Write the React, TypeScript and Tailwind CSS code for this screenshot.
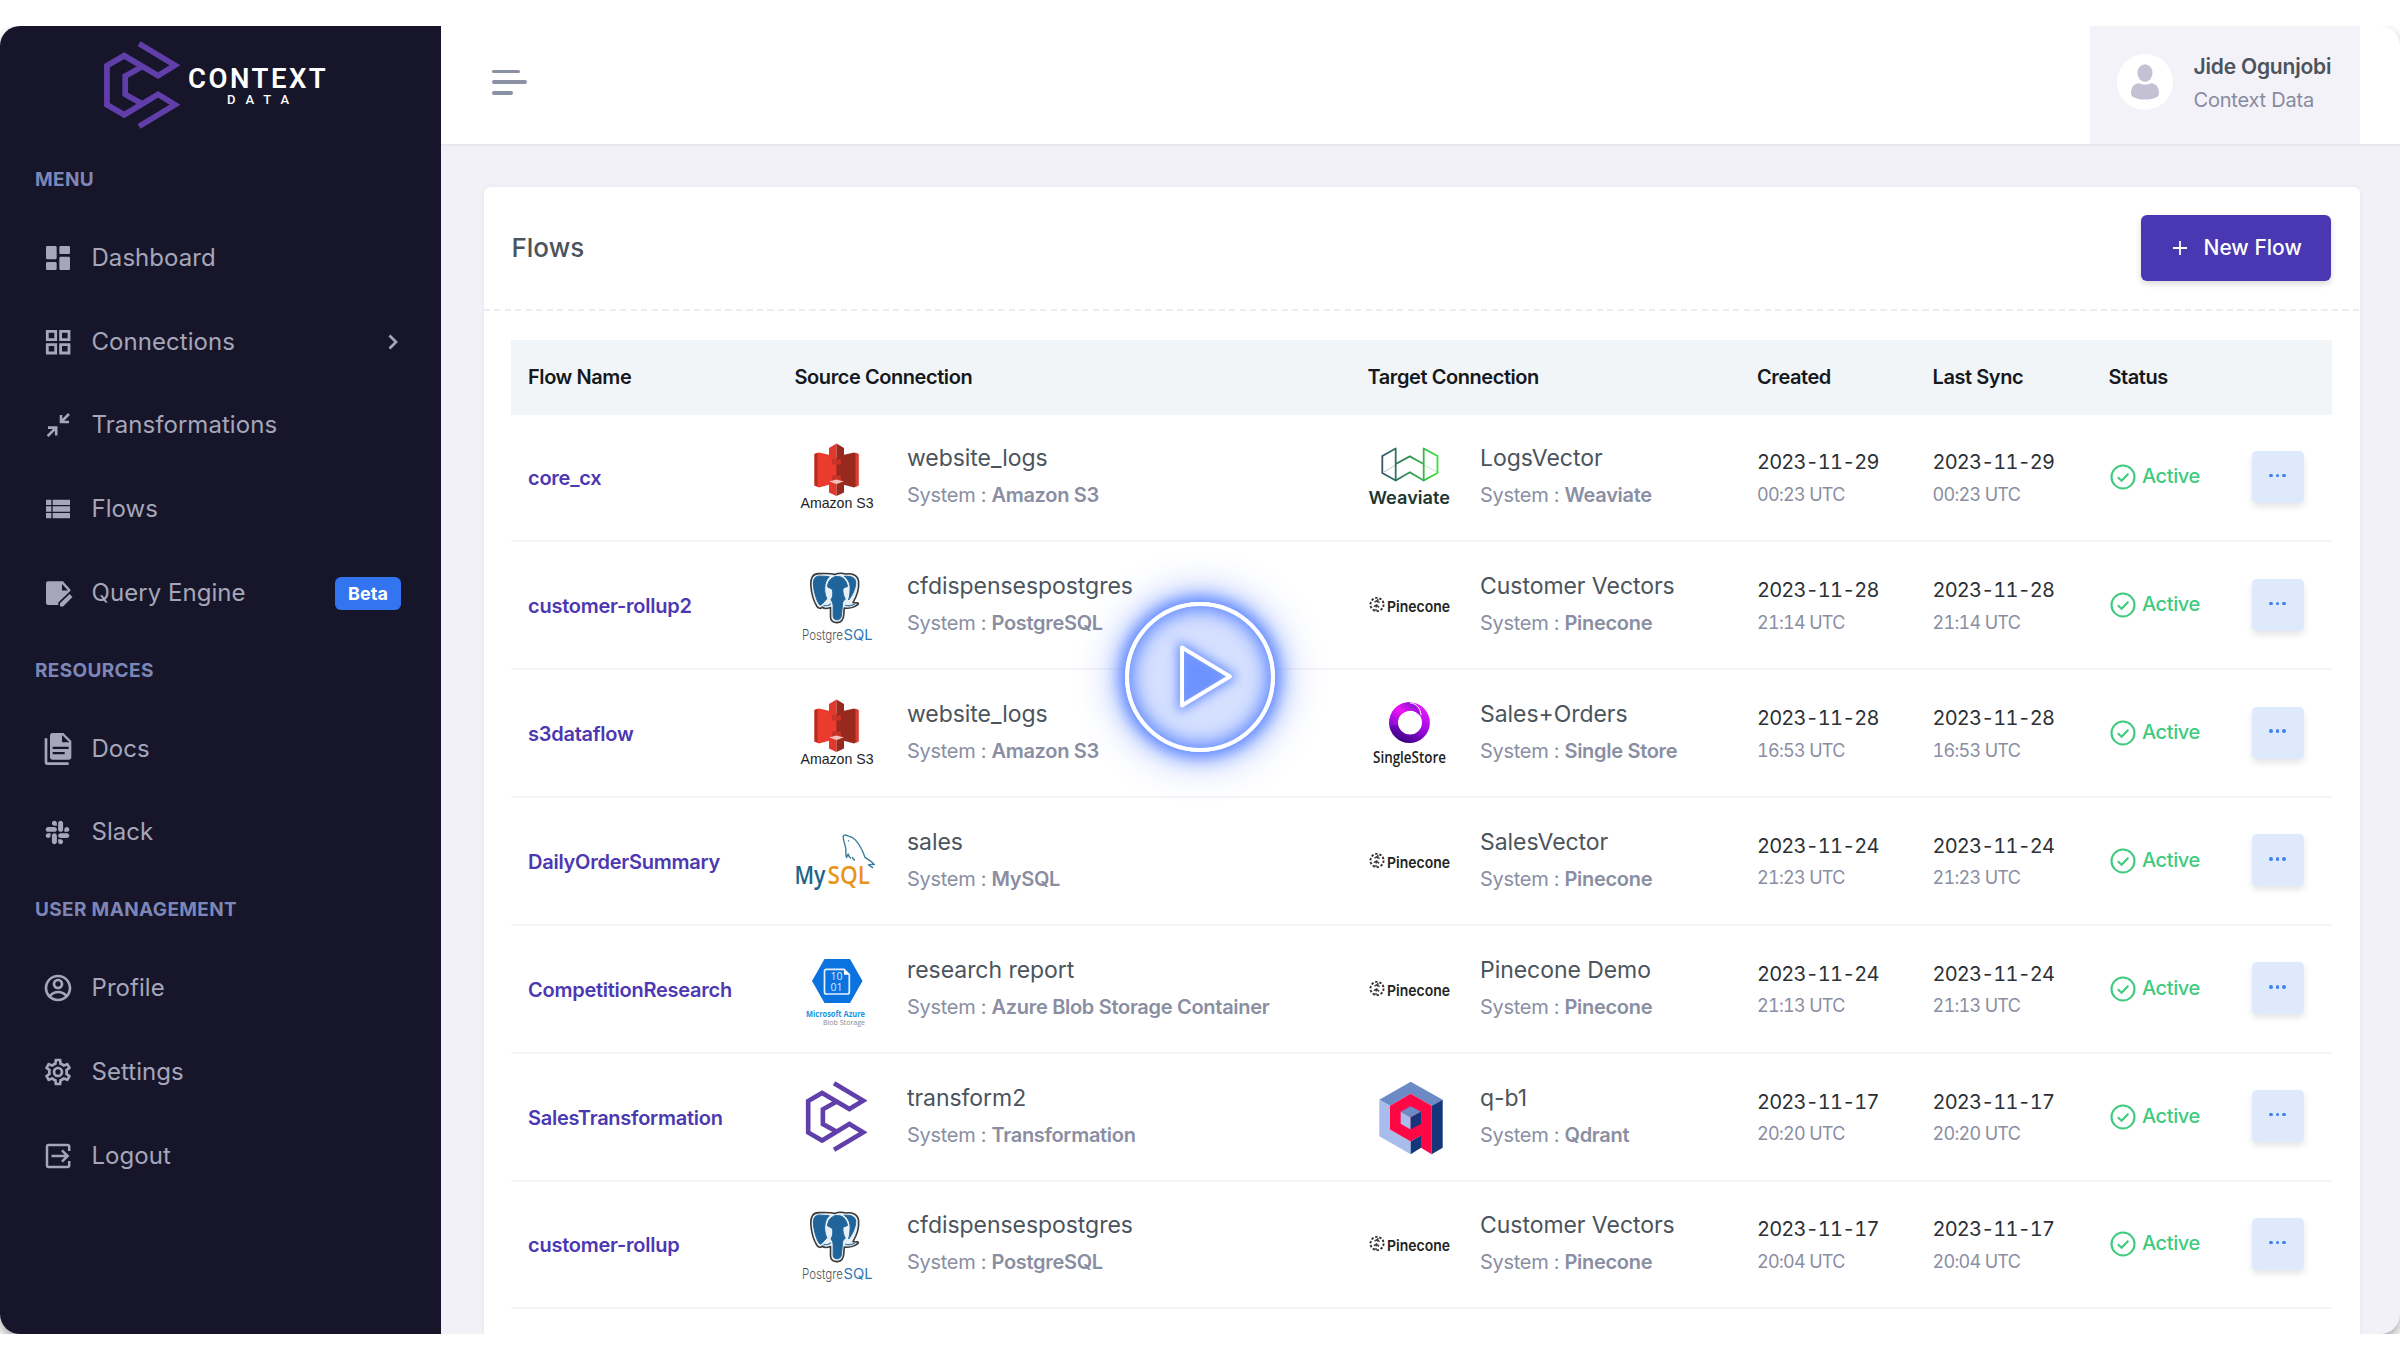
import type { ReactNode } from "react";
import { FaSlack } from "react-icons/fa";
import { MdOutlineSettings, MdViewList } from "react-icons/md";
import { RiAccountCircleLine, RiDashboardFill } from "react-icons/ri";

const INTER = "Inter, sans-serif";
const OPEN = "'Open Sans', sans-serif";

function BrandMark({ className }: { className: string }) {
  return (
    <svg viewBox="103 40 78 89" className={className} fill="none" stroke="#613fab" strokeWidth="5.8">
      <path d="M139.500 42.600 176 64.500 158.800 75 124.500 54.800 107 65v39.500l17.500 10.200L158.800 94 176 104.500 139.500 126.400" />
      <path d="M142.500 66 125.500 75.500v18.500l17 9.500" />
    </svg>
  );
}

/* ---------- sidebar icons ---------- */

const GridIcon = () => (
  <svg viewBox="0 0 32 32" className="size-8" fill="none" stroke="currentColor" strokeWidth="2.800">
    <path d="M5.300 5.300h8.400v8.400H5.300zM18.600 5.300H27v8.400h-8.400zM5.300 18.600h8.400V27H5.300zM18.600 18.600H27V27h-8.400z" />
  </svg>
);

const CollapseIcon = () => (
  <svg viewBox="0 0 32 32" className="size-8" fill="none" stroke="currentColor" strokeWidth="2.600">
    <path d="M19 6v7h8M19 13l8-8M6 18.600h8.200v8M14.200 18.600 5.600 27.200" />
  </svg>
);

const FileEditIcon = () => (
  <svg viewBox="0 0 32 32" className="size-8" fill="currentColor">
    <path
      fillRule="evenodd"
      d="M6 4.300h15l7.500 8.400v1L16.300 25.500V28H6a2 2 0 0 1-2-2V6.300a2 2 0 0 1 2-2zM20 7v6.500h6z"
    />
    <path d="M18 29.500v-3.200l9.600-9.400 2.900 3-9.400 9.600z" />
  </svg>
);

const DocsIcon = () => (
  <svg viewBox="0 0 24 24" className="size-8" fill="currentColor" fillRule="evenodd">
    <path d="M15 7h5.500L15 1.500zM8 0h8l6 6v12a2 2 0 0 1-2 2H8a2 2 0 0 1-2-2V2a2 2 0 0 1 2-2zM4 4v18h16v2H4a2 2 0 0 1-2-2V4zM17 16v-1.700H8V16zM20 12v-1.700H8V12z" />
  </svg>
);

const LogoutIcon = () => (
  <svg viewBox="0 0 32 32" className="size-8" fill="none" stroke="currentColor" strokeWidth="2.500">
    <path d="M27.200 11V6.500A1.500 1.500 0 0 0 25.700 5H6.500A1.500 1.500 0 0 0 5 6.500v19A1.500 1.500 0 0 0 6.500 27h19.200a1.500 1.500 0 0 0 1.500-1.500V21" />
    <path d="M9.500 16h16M20 10.300l5.700 5.700-5.700 5.700" />
  </svg>
);

/* ---------- connection logos ---------- */

const S3Logo = () => (
  <svg viewBox="0 0 84 80" className="h-20 w-21 shrink-0 overflow-visible">
    <path fill="#ea3b2e" d="M19.500 17 24 15.500l13 3V47l-13 3.500-4.500-2z" />
    <path fill="#b52b20" d="m19.500 17 3-1.200v34l-3-1.300z" />
    <path fill="#98291e" d="m46 18.500 13-3 4.500 1.500v31.500l-4.500 2L46 47z" />
    <path fill="#e23a2d" d="m60.500 16 3 1v31.500l-3 1.300z" />
    <path fill="#c93226" d="M37 21h9v25h-9z" />
    <path fill="#e13a2d" d="m34 11 7.500-4.500V23L34 21z" />
    <path fill="#98291e" d="m49 11-7.500-4.500V23l7.500-2z" />
    <path fill="#ea3b2e" d="M34 27.500h7.500v11H34z" />
    <path fill="#98291e" d="M41.500 27.500H49v11h-7.500z" />
    <path fill="#f5c1bb" d="m34 44.500 7.500-2 7.500 2-7.500 3z" />
    <path fill="#e13a2d" d="m34 44.500 7.500 2.500v12L34 55.500z" />
    <path fill="#98291e" d="m49 44.500-7.500 2.500v12l7.500-3.500z" />
    <text x="5.500" y="71" fontSize="15" textLength="73" lengthAdjust="spacingAndGlyphs" fill="#222" fontFamily="'Liberation Sans', sans-serif">
      Amazon S3
    </text>
  </svg>
);

const PostgresLogo = () => (
  <svg viewBox="0 0 84 80" className="h-20 w-21 shrink-0 overflow-visible">
    <g strokeLinejoin="round" strokeLinecap="round">
      <path
        fill="#e8f0f6"
        stroke="#3a3a3a"
        strokeWidth="1.600"
        d="M24 8.600C18 8.300 15.400 13 15.800 20c.5 8 3 16.500 6.200 21.500 1.500 2.400 4.200 2.300 5.500.5 1 1.600 4.500 1.700 8 .6V52c0 4 3 6 7 5.600 4.500-.4 6-3.600 6.300-8l.5-6.600c4.500.7 10.500-.6 13.700-3.600.8-.8.3-1.600-.8-1.500-2 .2-3.200.1-4.200-.3 3.500-6 6.200-14.500 5.600-21C63 10 57 8 50.500 9c-2.600-.8-7-1-11 .4C36 8.200 30 8.400 24 8.600z"
      />
      <g fill="#1f659c" stroke="#1f659c" strokeWidth="1">
        <path d="M24.500 11.200c-5-.6-6.400 3.600-6 8.800.5 7.500 3 15 5.500 19 1.200 1.900 2.100 1.300 3.300-.2l4.500-5c-2-4.500-2.700-8.800-1.700-14.300.6-3.300 1.900-5.700 4.200-7.700-3-.6-6.300-.6-9.800-.6z" />
        <path d="M40 11.800c-5 1.600-7 5-7.500 10l4.700 2.500c1.300 3.500.5 8-1.200 10.500 1 1.600 2.200 3.600 2.200 6V51c0 3 2 4 4.400 3.800 2.800-.2 3.800-2.400 4-6L47.500 39c.2-2.400 1-3.800 2.800-4.800-2-4-3.200-8.800-1.800-11.300l4-1.400C51.500 15.500 47.500 10 40 11.800z" />
        <path d="M49.500 11.400c4 3 6 7.600 5.600 13.100-.2 4-.4 7-1.600 10.500 3.900-4.500 7.200-11.500 7.200-17.700C60.500 12.500 55.500 10.600 49.500 11.400z" />
      </g>
      <path fill="none" stroke="#4a7fa9" strokeWidth="1.300" d="M29 40.500c2.500.5 5 0 6.500-1.500M50.500 40.300c3 .8 6.500.3 9-1.200" />
    </g>
    <text x="7" y="75" fontSize="14.500" textLength="41" lengthAdjust="spacingAndGlyphs" fontWeight="300" fontFamily={INTER} fill="#555">
      Postgre
    </text>
    <text x="48.500" y="75" fontSize="14.500" textLength="29" lengthAdjust="spacingAndGlyphs" fontWeight="400" fontFamily={INTER} fill="#2b77b5">
      SQL
    </text>
  </svg>
);

const MySqlLogo = () => (
  <svg viewBox="0 0 84 80" className="h-20 w-21 shrink-0 overflow-visible">
    <path
      fill="none"
      stroke="#3a7d9c"
      strokeWidth="1.400"
      strokeLinejoin="round"
      d="M56 37.500c-1.500-1-2.400-2.500-2.800-4.500l-1.600 3.500c-1.200-3-.6-6-.8-9-.5-3.500-2.500-7-2.600-12 .4-1.800 2.300-1.800 4.600-.6 2 .4 5 1.200 7.500 4 4.500 5 7.500 11 9.700 17.500 2 1.600 5.600 2.500 9.400 7.200-2.500-.3-4.500-.3-6 .4 1.700 1.200 3.500 1.800 4.600 3M53 19.500l1 .8M60 39c-1.600-.3-2.400-1.400-2.800-3"
    />
    <text x="-0.500" y="63" fontSize="25.500" textLength="31" lengthAdjust="spacingAndGlyphs" fontWeight="600" fontFamily={OPEN} fill="#1c6587">
      My
    </text>
    <text x="32.500" y="63" fontSize="25.500" textLength="42.500" lengthAdjust="spacingAndGlyphs" fontWeight="600" fontFamily={OPEN} fill="#e8951c">
      SQL
    </text>
  </svg>
);

const AzureLogo = () => (
  <svg viewBox="0 0 84 80" className="h-20 w-21 shrink-0 overflow-visible">
    <path fill="#0b73e0" d="M29.500 10h25.500L67.500 32 55 54H29.500L17 32z" />
    <path fill="none" stroke="#e6f1fd" strokeWidth="1.700" d="M32 20.300h17l5.300 5.200V43a2 2 0 0 1-2 2H31.500a2 2 0 0 1-2-2V22.300a2 2 0 0 1 2-2z" />
    <path fill="#fff" d="M49 20v5.700h5.700z" />
    <g fill="#d9e9fc" fontFamily={OPEN} fontSize="10.500" textAnchor="middle">
      <text x="41.500" y="31">10</text>
      <text x="41.500" y="42">01</text>
    </g>
    <text x="11" y="67.500" fontSize="8.500" textLength="59" lengthAdjust="spacingAndGlyphs" fontWeight="700" fontFamily={OPEN} fill="#2492e0">
      Microsoft Azure
    </text>
    <text x="28" y="75.500" fontSize="7.800" textLength="42" lengthAdjust="spacingAndGlyphs" fontFamily={OPEN} fill="#888">
      Blob Storage
    </text>
  </svg>
);

const TransformLogo = () => (
  <div className="flex h-20 w-21 shrink-0 items-center pl-2.5">
    <BrandMark className="h-[71px] w-[62px]" />
  </div>
);

const WeaviateLogo = () => (
  <svg viewBox="0 0 84 80" className="h-20 w-21 shrink-0 overflow-visible">
    <defs>
      <linearGradient id="weaviate" gradientUnits="userSpaceOnUse" x1="14" y1="0" x2="70" y2="0">
        <stop offset="0" stopColor="#35566f" />
        <stop offset="0.300" stopColor="#2b7a5b" />
        <stop offset="0.650" stopColor="#37a84f" />
        <stop offset="1" stopColor="#35e632" />
      </linearGradient>
    </defs>
    <g fill="none" stroke="url(#weaviate)" strokeWidth="1.800" strokeLinejoin="round">
      <path d="M27.700 11.500 14.300 19v17l13.400 7.500zM55.700 11.500 69.500 19v17l-13.800 7.500z" />
      <path d="m27.700 27 14.100-7.600L55.700 27M27.700 43.500l14.100-8.200 13.900 8.200" />
      <path strokeWidth="0.600" opacity="0.600" d="m16 35 11.700-7M69 35l-13.300-7" />
    </g>
    <text x="0.500" y="66.500" fontSize="17.500" textLength="81.500" lengthAdjust="spacingAndGlyphs" fontWeight="600" fontFamily={INTER} fill="#20362f">
      Weaviate
    </text>
  </svg>
);

const PineconeLogo = () => (
  <svg viewBox="0 0 84 80" className="h-20 w-21 shrink-0 overflow-visible">
    <circle cx="9" cy="39.500" r="6.600" fill="none" stroke="#333" strokeWidth="1.900" strokeDasharray="2.400 1.750" />
    <path stroke="#444" strokeWidth="1.500" fill="none" d="M9.800 34 9.300 37.500M8.800 39.500l-.5 3M6.500 37.100l2.800-1.600 2.200 2.300M5.800 41.700l2.800-1.700 2.400 2.400M8 44v2" />
    <text x="19" y="46.500" fontSize="15" textLength="63" lengthAdjust="spacingAndGlyphs" fontWeight="600" fontFamily={INTER} fill="#222">
      Pinecone
    </text>
  </svg>
);

const SingleStoreLogo = () => (
  <svg viewBox="0 0 84 80" className="h-20 w-21 shrink-0 overflow-visible">
    <defs>
      <linearGradient id="ring" x1="0.700" y1="0" x2="0.200" y2="1">
        <stop offset="0" stopColor="#f01cff" />
        <stop offset="0.450" stopColor="#a30ae6" />
        <stop offset="1" stopColor="#2a0075" />
      </linearGradient>
      <linearGradient id="ringTop" x1="0" y1="1" x2="1" y2="0">
        <stop offset="0" stopColor="#7a0bd0" />
        <stop offset="0.500" stopColor="#f214f7" />
        <stop offset="1" stopColor="#5b13c0" />
      </linearGradient>
    </defs>
    <path
      fill="url(#ring)"
      fillRule="evenodd"
      d="M41.500 9.300a20.400 20.400 0 1 0 0 40.800 20.400 20.400 0 0 0 0-40.800zM42 17.500a12 12 0 1 1 0 24 12 12 0 0 1 0-24z"
    />
    <path fill="url(#ringTop)" d="M22 33C19.500 20 29 9.300 41.500 9.300c6 1.200 10 6 10.700 13.700-4-5-9.500-6.500-15-4C31 21.500 29 27 30 32z" />
    <path fill="none" stroke="#fff" strokeWidth="1" d="M42 9.800c6.500 1 10.500 5.500 11 12.500" />
    <text x="5" y="70" fontSize="16.500" textLength="73" lengthAdjust="spacingAndGlyphs" fontWeight="600" fontFamily={OPEN} fill="#222">
      SingleStore
    </text>
  </svg>
);

const QdrantLogo = () => (
  <svg viewBox="0 0 84 80" className="h-20 w-21 shrink-0 overflow-visible">
    <path fill="#6b8ac6" d="m11.300 22.800 31.400-18 32 18-11 6-21-12-20.700 12z" />
    <path fill="#a9bdec" d="m11.300 22.800 10.700 6v23.700l20.700 12v12.700l-31.400-18z" />
    <path fill="#ff0745" d="m42.700 16.800 21 12v48.400L53 70.800V58.500l-10.300 6-20.700-12V28.800z" />
    <path fill="#15377a" d="M74.700 22.800v48l-11 6.400V28.800zM42.700 64.500l10.300-6v12.300l-10.300 6.400z" />
    <path fill="#6b8ac6" d="m32.700 34.800 10-5.600L53 34.800l-10.300 5.700z" />
    <path fill="#a9bdec" d="m32.700 34.800 10 5.700v12l-10-5.700z" />
    <path fill="#15377a" d="M53 34.800 42.700 40.500v12l10.300-5.700z" />
  </svg>
);

/* ---------- sidebar ---------- */

function NavItem({ icon, label, children }: { icon: ReactNode; label: string; children?: ReactNode }) {
  return (
    <a className="flex h-[83.800px] items-center pr-[40px] pl-[42px] text-[24px] tracking-[0.05px] text-[#a5a6b9]">
      {icon}
      <span className="ml-[17.500px] flex-1">{label}</span>
      {children}
    </a>
  );
}

function NavTitle({ children }: { children: ReactNode }) {
  return (
    <div className="flex h-[71.800px] items-center pl-[35px] text-[19px] font-bold tracking-[0.35px] text-[#7c87b7]">
      {children}
    </div>
  );
}

function Sidebar() {
  return (
    <aside className="h-full w-[441px] shrink-0 bg-[#171529]">
      <div className="flex h-[118.700px] items-center pl-[103px]">
        <BrandMark className="h-[88px] w-[77px]" />
        <div className="mt-[4px] ml-[8px] flex flex-col items-center font-[Roboto] text-white">
          <span className="text-[27.500px] leading-[28px] font-semibold tracking-[2.500px]">CONTEXT</span>
          <span className="mt-[-2px] pl-[10px] text-[13px] leading-[18px] font-medium tracking-[10px]">DATA</span>
        </div>
      </div>
      <NavTitle>MENU</NavTitle>
      <NavItem icon={<RiDashboardFill className="size-8" />} label="Dashboard" />
      <NavItem icon={<GridIcon />} label="Connections">
        <svg viewBox="0 0 10 16" className="mr-[3px] h-4 w-2.5" fill="none" stroke="currentColor" strokeWidth="2.700">
          <path d="m1.500 1.500 6.500 6.500-6.500 6.500" />
        </svg>
      </NavItem>
      <NavItem icon={<CollapseIcon />} label="Transformations" />
      <NavItem icon={<MdViewList className="size-8" />} label="Flows" />
      <NavItem icon={<FileEditIcon />} label="Query Engine">
        <span className="flex h-[33px] w-[66px] items-center justify-center rounded-[6px] bg-[#3375f0] text-[18px] font-bold text-white">
          Beta
        </span>
      </NavItem>
      <NavTitle>RESOURCES</NavTitle>
      <NavItem icon={<DocsIcon />} label="Docs" />
      <NavItem icon={<FaSlack className="mr-[3px] ml-[2px] size-[27px]" />} label="Slack" />
      <NavTitle>USER MANAGEMENT</NavTitle>
      <NavItem icon={<RiAccountCircleLine className="size-8" />} label="Profile" />
      <NavItem icon={<MdOutlineSettings className="size-8" />} label="Settings" />
      <NavItem icon={<LogoutIcon />} label="Logout" />
    </aside>
  );
}

/* ---------- header ---------- */

function Header() {
  return (
    <header className="flex h-[120px] items-stretch justify-between border-b-2 border-[#e9e8f0] bg-white pr-[40px] pl-[51px]">
      <div className="flex flex-col gap-[7px] pt-[44px]">
        <span className="h-[3.700px] w-[28px] rounded-full bg-[#8b91a5]" />
        <span className="h-[3.700px] w-[35px] rounded-full bg-[#8b91a5]" />
        <span className="h-[3.700px] w-[21px] rounded-full bg-[#8b91a5]" />
      </div>
      <div className="flex w-[270.500px] bg-[#f3f2f8] pt-[25px] pl-[27px]">
        <svg viewBox="0 0 56 56" className="mt-[3px] size-14 shrink-0 rounded-full bg-white" fill="#c5c1d5">
          <ellipse cx="28" cy="19" rx="7.500" ry="8.800" />
          <path d="M22 29.200c3.500 1.800 8.500 1.800 12 0 5.500.3 8 4.500 8 10.300 0 8-28 8-28 0 0-5.800 2.500-10 8-10.300z" />
        </svg>
        <div className="ml-[21px] whitespace-nowrap">
          <div className="text-[21px] leading-[32px] font-semibold tracking-[-0.2px] text-[#4b545c]">Jide Ogunjobi</div>
          <div className="text-[20px] leading-[34px] tracking-[-0.2px] text-[#878ba0]">Context Data</div>
        </div>
      </div>
    </header>
  );
}

/* ---------- table ---------- */

type Side = { logo: () => ReactNode; name: string; system: string };
type Flow = { name: string; source: Side; target: Side; date: string; time: string };

const s3: Side = { logo: S3Logo, name: "website_logs", system: "Amazon S3" };
const pg: Side = { logo: PostgresLogo, name: "cfdispensespostgres", system: "PostgreSQL" };
const pinecone = (name: string): Side => ({ logo: PineconeLogo, name, system: "Pinecone" });

const flows: Flow[] = [
  { name: "core_cx", source: s3, target: { logo: WeaviateLogo, name: "LogsVector", system: "Weaviate" }, date: "2023-11-29", time: "00:23 UTC" },
  { name: "customer-rollup2", source: pg, target: pinecone("Customer Vectors"), date: "2023-11-28", time: "21:14 UTC" },
  { name: "s3dataflow", source: s3, target: { logo: SingleStoreLogo, name: "Sales+Orders", system: "Single Store" }, date: "2023-11-28", time: "16:53 UTC" },
  { name: "DailyOrderSummary", source: { logo: MySqlLogo, name: "sales", system: "MySQL" }, target: pinecone("SalesVector"), date: "2023-11-24", time: "21:23 UTC" },
  { name: "CompetitionResearch", source: { logo: AzureLogo, name: "research report", system: "Azure Blob Storage Container" }, target: pinecone("Pinecone Demo"), date: "2023-11-24", time: "21:13 UTC" },
  { name: "SalesTransformation", source: { logo: TransformLogo, name: "transform2", system: "Transformation" }, target: { logo: QdrantLogo, name: "q-b1", system: "Qdrant" }, date: "2023-11-17", time: "20:20 UTC" },
  { name: "customer-rollup", source: pg, target: pinecone("Customer Vectors"), date: "2023-11-17", time: "20:04 UTC" },
];

function Connection({ side }: { side: Side }) {
  const Logo = side.logo;
  return (
    <div className="flex items-center">
      <Logo />
      <div className="ml-[28.500px] whitespace-nowrap">
        <div className="text-[23px] leading-[37px] tracking-[-0.05px] text-[#4b545c]">{side.name}</div>
        <div className="text-[20px] leading-[37px] tracking-[-0.3px] text-[#8a8ea2]">
          System : <span className="font-semibold">{side.system}</span>
        </div>
      </div>
    </div>
  );
}

function Stamp({ date, time }: { date: string; time: string }) {
  return (
    <div className="pt-[3px] whitespace-nowrap tabular-nums">
      <div className="text-[20px] leading-[32.500px] tracking-[-0.800px] text-[#2b3036]">{date}</div>
      <div className="text-[18px] leading-[32.500px] tracking-[-0.700px] text-[#8a8ea2]">{time}</div>
    </div>
  );
}

const columns = "grid grid-cols-[266.500px_573px_389.500px_175.500px_176px_143px_1fr] items-center pl-[17px]";

function FlowRow({ flow }: { flow: Flow }) {
  return (
    <div className={`${columns} h-[127.850px] border-b-2 border-[#f5f5f8]`}>
      <span className="pt-[2px] text-[20px] font-semibold tracking-[-0.250px] text-[#4c38b2]">{flow.name}</span>
      <Connection side={flow.source} />
      <Connection side={flow.target} />
      <Stamp date={flow.date} time={flow.time} />
      <Stamp date={flow.date} time={flow.time} />
      <div className="flex items-center">
        <svg viewBox="0 0 28 28" className="size-7" fill="none" stroke="#3fcb7e" strokeWidth="2.100">
          <circle cx="14" cy="14" r="11.500" />
          <path d="m8.800 14.200 3.800 3.600 6.800-7" />
        </svg>
        <span className="mb-[2px] ml-[5.500px] text-[20px] font-medium tracking-[-0.400px] text-[#3fcb7e]">Active</span>
      </div>
      <button className="mb-[1px] flex h-[52px] w-[52px] items-center justify-center gap-[3px] rounded-[5px] bg-[#dfe9fc] pb-[3px] shadow-[0_4px_6px_rgba(0,0,0,0.1)]">
        <i className="size-[3.500px] rounded-full bg-[#3f7ff2]" />
        <i className="size-[3.500px] rounded-full bg-[#3f7ff2]" />
        <i className="size-[3.500px] rounded-full bg-[#3f7ff2]" />
      </button>
    </div>
  );
}

function FlowsCard() {
  return (
    <section className="mt-[41px] mr-[40px] ml-[42.500px] h-[1200px] rounded-t-[6px] bg-white shadow-[0_0_4px_rgba(0,0,0,0.06)]">
      <div className="flex h-[122px] items-center justify-between pr-[29px] pl-[28px]">
        <h1 className="text-[26px] font-medium text-[#4b545c]">Flows</h1>
        <button className="flex h-[66px] w-[190px] items-center rounded-[6px] bg-[#4a37b2] pl-[31.500px] text-[21px] font-medium text-white shadow-[0_3px_6px_rgba(0,0,0,0.15)]">
          <svg viewBox="0 0 14 14" className="mr-[17px] size-[14px]" stroke="currentColor" strokeWidth="1.800">
            <path d="M7 0v14M0 7h14" />
          </svg>
          New Flow
        </button>
      </div>
      <div className="h-[31px] bg-[repeating-linear-gradient(90deg,#ededf0_0_6px,transparent_6px_10.5px)] bg-[length:100%_2px] bg-no-repeat" />
      <div className="pr-[28.500px] pl-[27.500px]">
        <div className={`${columns} h-[75px] bg-[#f1f5f8] text-[20px] font-semibold tracking-[-0.430px] whitespace-nowrap text-[#15181c]`}>
          <span>Flow Name</span>
          <span>Source Connection</span>
          <span>Target Connection</span>
          <span>Created</span>
          <span>Last Sync</span>
          <span>Status</span>
        </div>
        {flows.map((flow) => (
          <FlowRow key={flow.name} flow={flow} />
        ))}
      </div>
    </section>
  );
}

function PlayButton() {
  return (
    <button className="absolute top-[602px] left-[1124.500px] flex size-[150px] items-center justify-center rounded-full border-4 border-white bg-[#d3deff]/95 shadow-[0_0_16px_5px_rgba(76,122,255,0.9),0_0_38px_10px_rgba(76,122,255,0.45),inset_0_0_18px_4px_rgba(76,122,255,0.9)]">
      <svg viewBox="0 0 90 90" className="size-[90px] overflow-visible">
        <path d="M27 15.500v58L75 44.500z" className="fill-[#5f88ff] stroke-[#5f88ff] stroke-[8] blur-[6px]" />
        <path d="M27 15.500v58L75 44.500z" fill="#83a3ff" fillOpacity="0.400" stroke="#fff" strokeWidth="4" strokeLinejoin="round" />
      </svg>
    </button>
  );
}

export default function App() {
  return (
    <div className="relative h-[1351px] w-[2400px] overflow-hidden bg-white pt-[25.500px] font-[Inter,sans-serif]">
      <div className="h-[1308.500px] overflow-hidden">
        <div className="flex h-full overflow-hidden rounded-[20px] bg-[#f2f1f7] shadow-[0_6px_12px_rgba(0,0,0,0.35)]">
          <Sidebar />
          <main className="min-w-0 flex-1">
            <Header />
            <FlowsCard />
          </main>
        </div>
      </div>
      <PlayButton />
    </div>
  );
}
